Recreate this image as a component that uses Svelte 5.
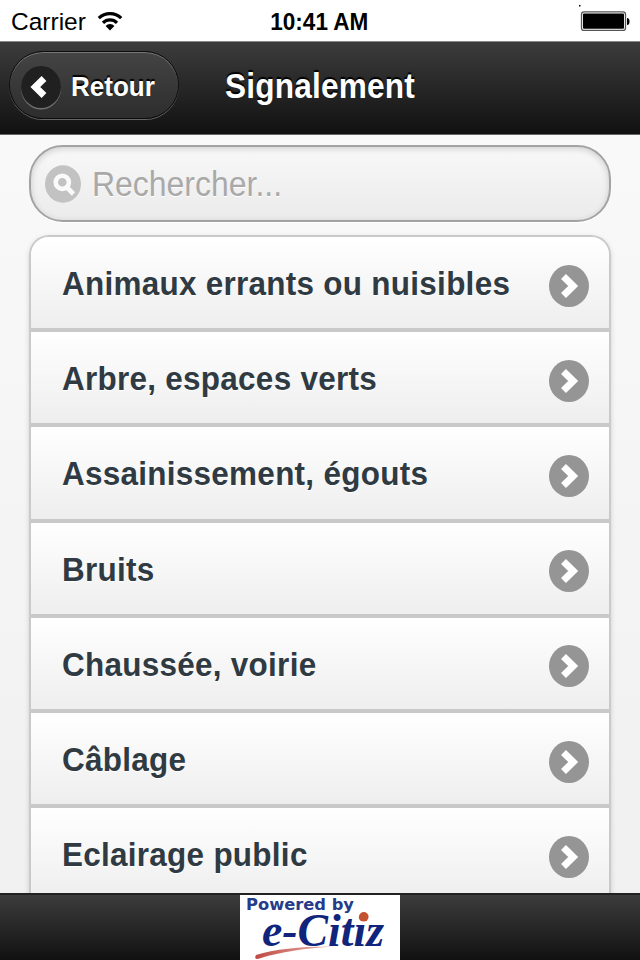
<script lang="ts">
	interface Category {
		id: number;
		label: string;
	}

	const categories: Category[] = [
		{ id: 1, label: 'Animaux errants ou nuisibles' },
		{ id: 2, label: 'Arbre, espaces verts' },
		{ id: 3, label: 'Assainissement, égouts' },
		{ id: 4, label: 'Bruits' },
		{ id: 5, label: 'Chaussée, voirie' },
		{ id: 6, label: 'Câblage' },
		{ id: 7, label: 'Eclairage public' }
	];

	let query = $state('');

	let visible = $derived(
		categories.filter((c) => c.label.toLowerCase().includes(query.toLowerCase()))
	);
</script>

<div class="screen">
	<div class="status">
		<div class="status-left">
			<span class="carrier">Carrier</span>
			<svg class="wifi" viewBox="0 0 26 20" aria-hidden="true">
				<path d="M1.8 7.2a16 16 0 0 1 22.4 0" />
				<path d="M6 11.8a9.8 9.8 0 0 1 14 0" />
				<path class="wifi-dot" d="M8.6 15a6 6 0 0 1 8.8 0l-4.4 4.4z" />
			</svg>
		</div>
		<span class="clock">10:41 AM</span>
		<svg class="battery" viewBox="0 0 52 32" aria-hidden="true">
			<rect x="1" y="5" width="1.5" height="1.5" />
			<rect class="battery-case" x="3.5" y="11.8" width="44" height="18.6" rx="2.5" />
			<rect x="5" y="13.6" width="41" height="15.2" rx="1" />
			<path d="M49 18q2.5 0 2.5 3.5t-2.5 3.5z" />
		</svg>
	</div>

	<header class="header">
		<button type="button" class="back">
			<span class="back-icon">
				<svg viewBox="0 0 40 42" aria-hidden="true">
					<path d="M23 12.5 14.3 21 23 29.5" />
				</svg>
			</span>
			<span class="back-label">Retour</span>
		</button>
		<h1 class="title">Signalement</h1>
	</header>

	<main class="content">
		<label class="search">
			<svg class="search-icon" viewBox="0 0 36 38" aria-hidden="true">
				<ellipse cx="18" cy="19" rx="18" ry="18.7" />
				<circle class="lens" cx="17.3" cy="17.3" r="6.6" />
				<path d="M22 22.5 28.5 29" />
			</svg>
			<input type="text" placeholder="Rechercher..." bind:value={query} />
		</label>

		<ul class="list">
			{#each visible as category (category.id)}
				<li class="row">
					<span class="row-label">{category.label}</span>
					<svg class="row-icon" viewBox="0 0 40 42" aria-hidden="true">
						<ellipse cx="20" cy="21" rx="20" ry="21" />
						<path d="M14.5 11.5 24.2 21 14.5 30.5" />
					</svg>
				</li>
			{/each}
		</ul>
	</main>

	<footer class="footer">
		<svg class="logo" viewBox="0 0 160 66" role="img" aria-label="Powered by e-Citiz">
			<defs>
				<linearGradient id="swoosh" x1="0" x2="1">
					<stop offset="0" stop-color="#c04a45" />
					<stop offset="1" stop-color="#e8b8ae" />
				</linearGradient>
			</defs>
			<rect width="160" height="66" fill="#fff" />
			<path d="M16 60Q45 51 94 51.5Q50 54 21 63Q13 66 16 60z" fill="url(#swoosh)" />
			<text class="powered" x="6" y="15" textLength="108" lengthAdjust="spacingAndGlyphs">Powered by</text>
			<text class="brand" x="22" y="51" textLength="122" lengthAdjust="spacingAndGlyphs">e-Citiz</text>
			<circle cx="123.8" cy="21.8" r="4.8" fill="#c4512f" />
		</svg>
	</footer>
</div>

<style>
	:global(body) {
		margin: 0;
		background: #f3f3f3;
	}

	.screen {
		display: flex;
		flex-direction: column;
		width: 640px;
		height: 960px;
		overflow: hidden;
		font-family: 'Liberation Sans', Arial, sans-serif;
		background: #f3f3f3;
	}

	.status {
		flex: none;
		display: grid;
		grid-template-columns: 1fr auto 1fr;
		align-items: start;
		height: 41px;
		background: #fff;
		color: #000;
	}

	.status-left {
		display: flex;
		padding: 8px 0 0 11px;
		gap: 11px;
	}

	.carrier {
		font-size: 24.5px;
		line-height: 28px;
	}

	.wifi {
		width: 26px;
		height: 20px;
		margin-top: 3px;
	}

	.wifi path {
		fill: none;
		stroke: #000;
		stroke-width: 3.2;
	}

	.wifi .wifi-dot {
		fill: #000;
		stroke: none;
	}

	.clock {
		padding-top: 8px;
		font-size: 24.5px;
		line-height: 28px;
		font-weight: 700;
		transform: translateX(-1px) scaleX(0.92);
	}

	.battery {
		justify-self: end;
		width: 52px;
		height: 32px;
		margin-right: 10px;
	}

	.battery-case {
		fill: #fff;
		stroke: #555;
		stroke-width: 1.3;
	}

	.header {
		flex: none;
		box-sizing: border-box;
		display: flex;
		align-items: flex-start;
		height: 94px;
		padding: 9px 9px 0;
		border-top: 1px solid #888;
		border-bottom: 1px solid #666;
		background: linear-gradient(#3c3c3c, #111);
	}

	.back {
		box-sizing: border-box;
		display: flex;
		align-items: center;
		width: 170px;
		height: 68px;
		padding: 4px 0 0 11px;
		gap: 10px;
		border: 1.5px solid #0c0c0c;
		border-radius: 34px;
		background: linear-gradient(#444, #2d2d2d);
		box-shadow:
			inset 0 1px 0 #777,
			0 1px 0 #666;
		color: #fff;
		font: inherit;
	}

	.back-icon {
		flex: none;
		width: 40px;
		height: 42px;
		border-radius: 50%;
		background: #202020;
		box-shadow: 0 1.5px 0 #707070;
	}

	.back-icon svg {
		display: block;
		width: 40px;
		height: 42px;
	}

	.back-icon path {
		fill: none;
		stroke: #fff;
		stroke-width: 6.8;
	}

	.back-label {
		font-size: 28px;
		line-height: 32px;
		font-weight: 700;
		text-shadow: 0 -2px 1px #000;
		transform: scaleX(0.93);
		transform-origin: left;
	}

	.title {
		margin: 15px 0 0 46px;
		color: #fff;
		font-size: 34.5px;
		line-height: 40px;
		font-weight: 700;
		letter-spacing: 0.2px;
		text-shadow: 0 -2px 1px #000;
		transform: scaleX(0.916);
		transform-origin: left;
	}

	.content {
		flex: 1;
		min-height: 0;
		overflow: hidden;
		padding: 10px 29px 0;
		background: linear-gradient(#f9f9f9, #f0f0f0);
	}

	.search {
		box-sizing: border-box;
		display: flex;
		align-items: center;
		height: 77px;
		padding: 0 14px;
		gap: 11px;
		border: 2px solid #a3a3a3;
		border-radius: 34px;
		background: linear-gradient(#f8f8f8, #ebebeb);
		box-shadow:
			inset 0 2px 6px rgba(0, 0, 0, 0.16),
			0 1px 0 #fff;
	}

	.search-icon {
		flex: none;
		width: 36px;
		height: 38px;
		fill: #c2c2c2;
	}

	.search-icon .lens,
	.search-icon path {
		fill: none;
		stroke: #fafafa;
		stroke-width: 4.6;
	}

	.search input {
		flex: 1;
		min-width: 0;
		padding: 1px 0 0;
		border: 0;
		outline: 0;
		background: none;
		color: #333;
		font-family: inherit;
		font-size: 35px;
		text-shadow: 0 1px 0 #fff;
		transform: scaleX(0.913);
		transform-origin: left;
	}

	.search input::placeholder {
		color: #a9a9a9;
		opacity: 1;
	}

	.list {
		margin: 13px 0 0;
		padding: 0;
		list-style: none;
		overflow: hidden;
		border: 2px solid #cacaca;
		border-bottom: 0;
		border-radius: 20px 20px 0 0;
		box-shadow: 0 2px 5px rgba(0, 0, 0, 0.15);
	}

	.row {
		box-sizing: border-box;
		display: flex;
		align-items: center;
		justify-content: space-between;
		height: 95.2px;
		padding: 6px 20px 0 31px;
		border-bottom: 4px solid #c9c9c9;
		background: linear-gradient(#fff, #eee);
	}

	/* Labels keep their height but are set slightly condensed */
	.row-label {
		margin-top: -5px;
		color: #2f3a42;
		font-size: 34px;
		line-height: 40px;
		font-weight: 700;
		letter-spacing: 0.3px;
		white-space: nowrap;
		text-shadow: 0 1px 0 #fff;
		transform: scaleX(0.925);
		transform-origin: left;
	}

	.row-icon {
		flex: none;
		width: 40px;
		height: 42px;
		margin-left: -40px;
		fill: #959595;
	}

	.row-icon path {
		fill: none;
		stroke: #fff;
		stroke-width: 7;
	}

	.footer {
		flex: none;
		box-sizing: border-box;
		display: flex;
		justify-content: center;
		height: 67px;
		border-top: 2px solid #222;
		background: linear-gradient(#3c3c3c, #111);
	}

	.logo {
		width: 160px;
		height: 66px;
	}

	.powered {
		font-family: 'DejaVu Sans', sans-serif;
		font-size: 16px;
		font-weight: 700;
		fill: #263c8a;
	}

	.brand {
		font-family: 'Liberation Serif', serif;
		font-size: 46px;
		font-style: italic;
		font-weight: 700;
		fill: #10247c;
	}
</style>
